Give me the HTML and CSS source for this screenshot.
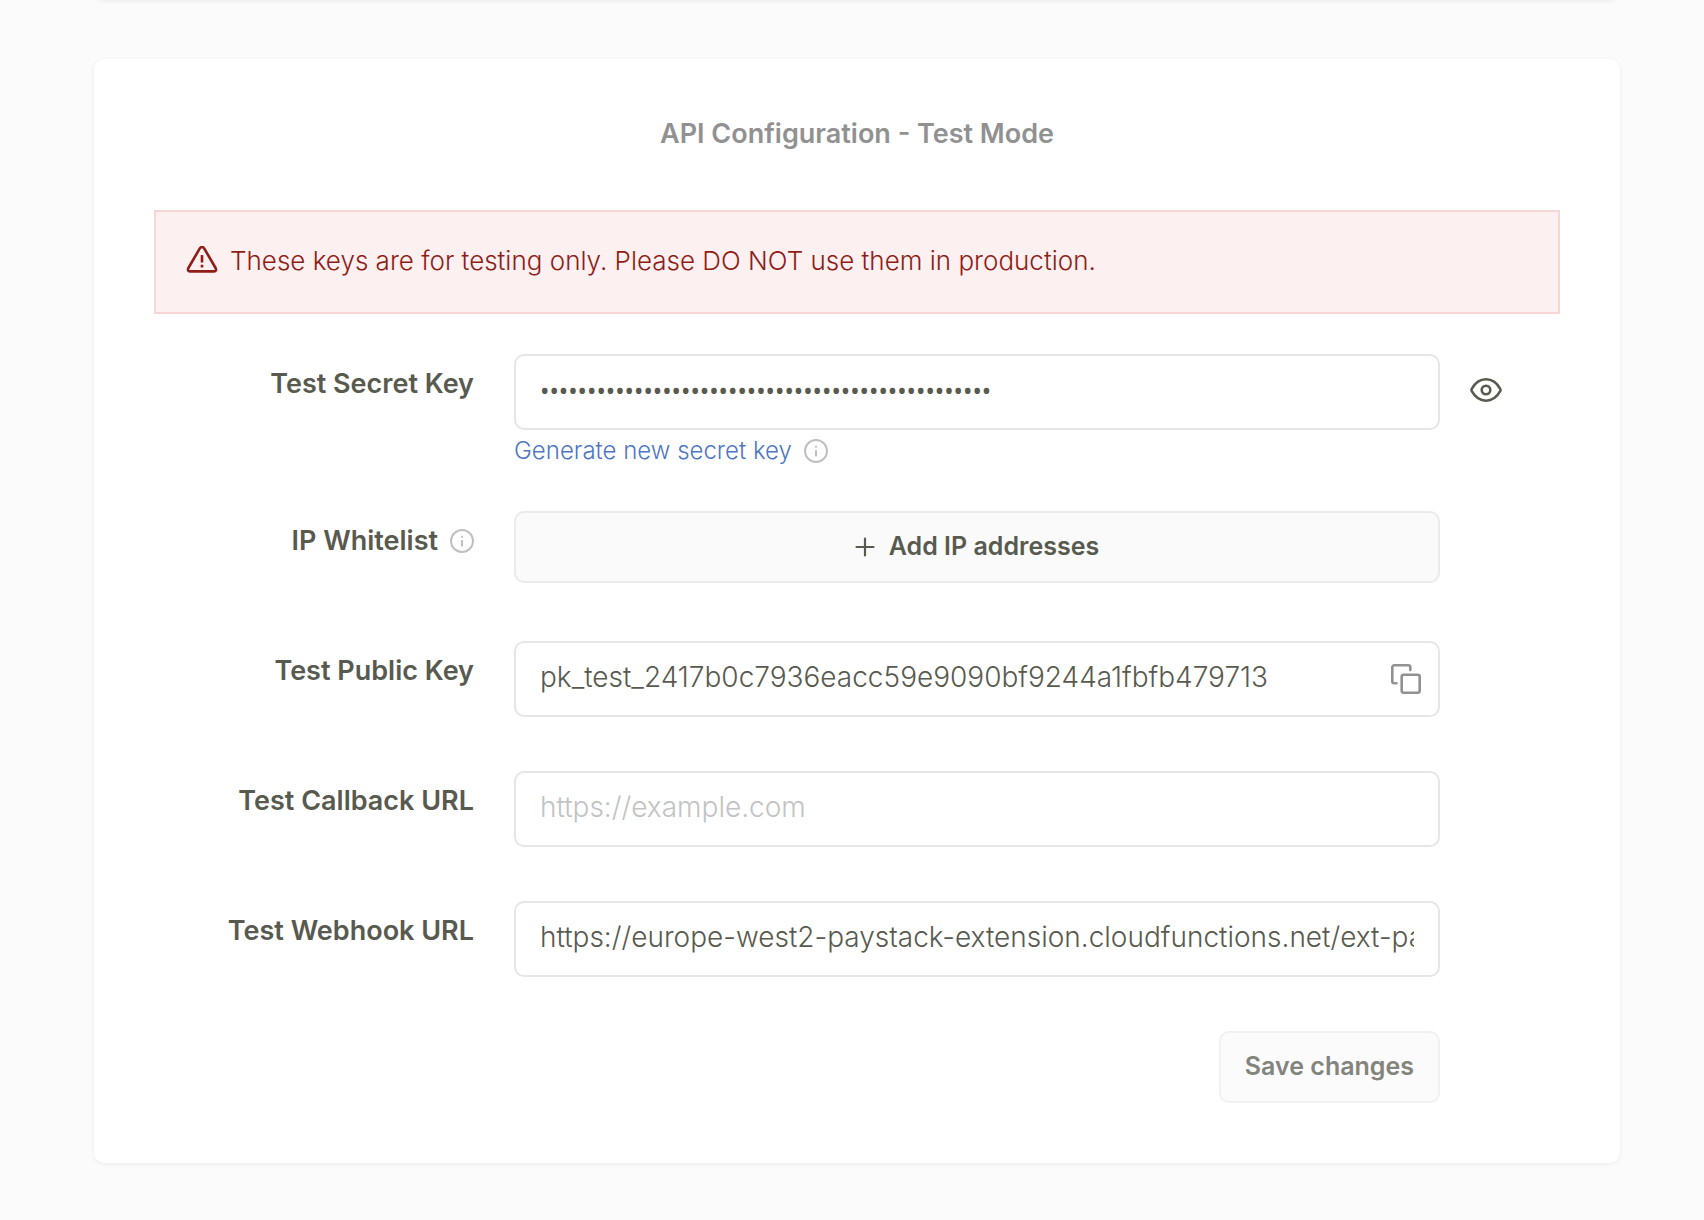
FILE: index.html
```html
<!DOCTYPE html>
<html lang="en">
<head>
<meta charset="utf-8">
<meta name="viewport" content="width=device-width, initial-scale=1">
<title>API Configuration - Test Mode</title>
<link rel="stylesheet" href="styles.css">
</head>
<body>
<main class="page">
  <div class="card card-previous"></div>
  <section class="card card-main">
    <h2 class="title">API Configuration - Test Mode</h2>
    <div class="alert" role="alert">
      <svg class="alert-icon" width="32" height="30" viewBox="0 0 32 30" fill="none" stroke="currentColor" stroke-width="2.6" stroke-linecap="round" stroke-linejoin="round" aria-hidden="true">
        <path d="M13.800 2.400Q16 -.6 18.200 2.400L29.600 22Q31 25.400 28 25.400H4Q1 25.400 2.400 22Z"/>
        <path d="M16 9v7.500M16 18.800v2.600" stroke-width="2.600" stroke-linecap="butt"/>
      </svg>
      <p class="alert-text">These keys are for testing only. Please DO NOT use them in production.</p>
    </div>
    <form class="form">
      <div class="row row-with-hint">
        <label class="label" for="secret">Test Secret Key</label>
        <div class="field">
          <input class="input input-secret" id="secret" type="password" readonly value="sk_test_0000000000000000000000000000000000000000">
          <div class="hint">
            <a class="link" href="#">Generate new secret key</a>
            <svg class="info" width="24" height="24" viewBox="0 0 24 24" fill="none" stroke="currentColor" stroke-width="2" aria-hidden="true"><circle cx="12" cy="12" r="11"/><path d="M12 11v6.400M12 6.800v2"/></svg>
          </div>
        </div>
        <button class="icon-button reveal" type="button" aria-label="Show secret key">
          <svg width="32" height="24" viewBox="0 0 32 24" fill="none" stroke="currentColor" stroke-width="2.600" stroke-linejoin="round" aria-hidden="true"><path d="M1.800 10.800C5 5 10 1.300 16 1.300S27 5 30.200 10.800Q30.900 12 30.200 13.200C27 19 22 22.700 16 22.700S5 19 1.800 13.200Q1.100 12 1.800 10.800Z"/><circle cx="16" cy="12" r="4.300"/></svg>
        </button>
      </div>
      <div class="row">
        <div class="label">
          <label for="whitelist">IP Whitelist</label>
          <svg class="info" width="24" height="24" viewBox="0 0 24 24" fill="none" stroke="currentColor" stroke-width="2" aria-hidden="true"><circle cx="12" cy="12" r="11"/><path d="M12 11v6.400M12 6.800v2"/></svg>
        </div>
        <div class="field">
          <button class="button button-wide" id="whitelist" type="button">
            <svg width="20" height="20" viewBox="0 0 20 20" fill="none" stroke="currentColor" stroke-width="2.200" stroke-linecap="round" aria-hidden="true"><path d="M10 1.500v17M1.500 10h17"/></svg>
            <span class="button-text">Add IP addresses</span>
          </button>
        </div>
      </div>
      <div class="row">
        <label class="label" for="public">Test Public Key</label>
        <div class="field field-copy">
          <input class="input input-copy" id="public" type="text" readonly value="pk_test_2417b0c7936eacc59e9090bf9244a1fbfb479713">
          <button class="icon-button copy" type="button" aria-label="Copy public key">
            <svg width="30" height="30" viewBox="0 0 30 30" fill="none" stroke="currentColor" stroke-width="2.600" stroke-linecap="round" stroke-linejoin="round" aria-hidden="true"><rect x="10.700" y="10.700" width="18" height="18" rx="2"/><path d="M19.300 6V3.300a2 2 0 0 0-2-2H3.300a2 2 0 0 0-2 2v14a2 2 0 0 0 2 2H5.500"/></svg>
          </button>
        </div>
      </div>
      <div class="row">
        <label class="label" for="callback">Test Callback URL</label>
        <div class="field">
          <input class="input" id="callback" type="text" placeholder="https://example.com">
        </div>
      </div>
      <div class="row">
        <label class="label" for="webhook">Test Webhook URL</label>
        <div class="field">
          <input class="input" id="webhook" type="text" value="https://europe-west2-paystack-extension.cloudfunctions.net/ext-paystack">
        </div>
      </div>
      <div class="actions">
        <button class="button button-save" type="submit" disabled><span class="button-text">Save changes</span></button>
      </div>
    </form>
  </section>
</main>
</body>
</html>
```
FILE: styles.css
```css
* {
  box-sizing: border-box;
}

body {
  margin: 0;
  background: #fbfbfb;
  color: #595a4f;
  font-family: Inter, "Liberation Sans", sans-serif;
  font-size: 28px;
  font-weight: 300;
}

.page {
  display: flex;
  flex-direction: column;
  gap: 59px;
  padding: 0 84px 56px 94px;
}

.card {
  background: #fff;
  border-radius: 10px;
  box-shadow: 0 1px 4px rgba(0, 0, 0, 0.07);
}

.card-previous {
  height: 20px;
  margin-top: -20px;
}

.card-main {
  padding: 55px 60px 60px;
}

.title {
  margin: 0 0 56px;
  color: #919191;
  font-size: 27px;
  font-weight: 600;
  line-height: 40px;
  text-align: center;
}

.alert {
  display: flex;
  align-items: center;
  gap: 12px;
  margin-bottom: 40px;
  padding: 29px 30px 31px;
  border: 2px solid #f9d6d6;
  background: #fdf0f0;
  color: #8f1d17;
}

.alert-icon {
  flex: none;
}

.alert-text {
  margin: 0;
  font-size: 26px;
  line-height: 40px;
}

.row {
  display: grid;
  grid-template-columns: 320px minmax(0, 1fr) 80px;
  column-gap: 40px;
  align-items: start;
  margin-bottom: 54px;
}

.row-with-hint {
  margin-bottom: 47px;
}

.label {
  display: flex;
  align-items: center;
  justify-content: flex-end;
  gap: 12px;
  font-size: 27px;
  font-weight: 600;
  line-height: 60px;
}

.field {
  min-height: 76px;
}

.input {
  display: block;
  width: 100%;
  height: 76px;
  padding: 0 24px 4px;
  border: 2px solid #e6e6e6;
  border-radius: 10px;
  background: #fff;
  color: inherit;
  font: inherit;
  outline: none;
}

.input::placeholder {
  color: #c3c3c3;
  opacity: 1;
}

.input-secret {
  font-family: "Noto Sans", sans-serif;
  font-size: 25px;
  font-weight: 400;
}

.hint {
  display: flex;
  align-items: center;
  gap: 12px;
  margin-top: 8px;
  font-size: 24px;
  line-height: 26px;
}

.link {
  color: #4f76c4;
  text-decoration: none;
}

.info {
  flex: none;
  color: #c0c0c0;
}

.icon-button {
  display: flex;
  align-items: center;
  padding: 0;
  border: 0;
  background: none;
  color: inherit;
  cursor: pointer;
}

.reveal {
  height: 72px;
  margin-left: -10px;
}

.field-copy {
  position: relative;
}

.input-copy {
  padding-right: 72px;
}

.copy {
  position: absolute;
  top: 0;
  right: 19px;
  height: 76px;
  color: #919191;
}

.button {
  display: flex;
  align-items: center;
  justify-content: center;
  gap: 14px;
  height: 72px;
  padding: 0 24px;
  border: 2px solid #ebebeb;
  border-radius: 10px;
  background: #fafafa;
  color: inherit;
  font: inherit;
  font-size: 25px;
  font-weight: 600;
}

.button-text {
  padding-bottom: 3px;
}

.button-wide {
  width: 100%;
}

.button-save {
  border-color: #f1f1f1;
  background: #fbfbfb;
  color: #83847b;
}

.actions {
  display: flex;
  justify-content: flex-end;
  padding-right: 120px;
}
```
